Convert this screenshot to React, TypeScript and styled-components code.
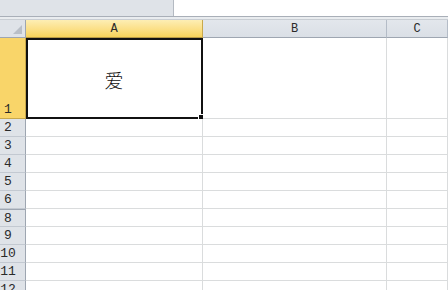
import React from "react";
import styled, { createGlobalStyle } from "styled-components";

const GlobalStyle = createGlobalStyle`
  html, body {
    margin: 0;
    padding: 0;
    background: #ffffff;
    overflow: hidden;
  }
`;

const Page = styled.div`
  width: 448px;
  height: 290px;
  overflow: hidden;
  display: flex;
  flex-direction: column;
  background: #fff;
  font-family: "Liberation Mono", "DejaVu Sans Mono", monospace;

  & > * {
    flex-shrink: 0;
  }
`;

const FormulaBar = styled.div`
  height: 16px;
  display: grid;
  grid-template-columns: 174px 1fr;
  border-bottom: 1px solid #a9afb8;
  background: #dfe3e8;
`;

const NameArea = styled.div`
  border-right: 1px solid #b4bac2;
  background: #dfe3e8;
`;

const FormulaInput = styled.div`
  background: #ffffff;
`;

const Strip = styled.div`
  height: 2px;
  background: #e9ecef;
  border-bottom: 1px solid #c8cdd3;
`;

const Sheet = styled.div`
  display: grid;
  grid-template-columns: 26px 177px 184px 1fr;
  grid-template-rows: 18px 81px;
  grid-auto-rows: 18px;
`;

const Corner = styled.div`
  position: relative;
  background: #dfe3e8;
  border-right: 1px solid #9ea6b1;
  border-bottom: 1px solid #9ea6b1;
  box-sizing: border-box;

  &::after {
    content: "";
    position: absolute;
    right: 3px;
    bottom: 3px;
    width: 0;
    height: 0;
    border-left: 9px solid transparent;
    border-bottom: 9px solid #b9bfc7;
  }
`;

const ColHead = styled.div<{ $active?: boolean }>`
  box-sizing: border-box;
  display: flex;
  align-items: center;
  justify-content: center;
  font-size: 12px;
  color: #2a2a2a;
  padding-top: 1px;
  border-right: 1px solid ${(p) => (p.$active ? "#c9a94b" : "#b4bcc7")};
  border-bottom: 1px solid ${(p) => (p.$active ? "#b89a45" : "#9ea6b1")};
  background: ${(p) =>
    p.$active
      ? "linear-gradient(#fdeeb4, #fbdf86 55%, #f7d35a)"
      : "linear-gradient(#e3e7ec, #dadfe6)"};
`;

const RowHead = styled.div<{ $active?: boolean; $tall?: boolean; $hiddenAbove?: boolean }>`
  box-sizing: border-box;
  display: flex;
  align-items: ${(p) => (p.$tall ? "flex-end" : "center")};
  justify-content: center;
  padding-right: 9px;
  padding-bottom: ${(p) => (p.$tall ? "1px" : "0")};
  font-size: 13px;
  color: #2a2a2a;
  background: ${(p) => (p.$active ? "#f9d569" : "#dfe3e8")};
  border-right: 1px solid ${(p) => (p.$active ? "#c9a94b" : "#9ea6b1")};
  border-bottom: 1px solid ${(p) => (p.$active ? "#c9a94b" : "#c3c9d1")};
  border-top: ${(p) => (p.$hiddenAbove ? "1px solid #9ea6b1" : "none")};
`;

const Cell = styled.div`
  box-sizing: border-box;
  position: relative;
  border-right: 1px solid #dadcdd;
  border-bottom: 1px solid #dadcdd;
  background: #fff;
  display: flex;
  align-items: center;
  justify-content: center;
`;

const Char = styled.span`
  font-family: "Noto Sans CJK SC", sans-serif;
  font-size: 19px;
  font-weight: 300;
  color: #111;
  margin-top: 3px;
`;

const Selection = styled.div`
  position: absolute;
  left: 0;
  top: 0;
  right: -1px;
  bottom: -1px;
  border: 2px solid #111;
  pointer-events: none;
`;

const FillHandle = styled.div`
  position: absolute;
  right: -3px;
  bottom: -3px;
  width: 5px;
  height: 5px;
  background: #111;
  outline: 1px solid #fff;
`;

const rows = ["2", "3", "4", "5", "6", "8", "9", "10", "11", "12"];

const App: React.FC = () => {
  return (
    <>
      <GlobalStyle />
      <Page>
        <FormulaBar>
          <NameArea />
          <FormulaInput />
        </FormulaBar>
        <Strip />
        <Sheet>
          <Corner />
          <ColHead $active>A</ColHead>
          <ColHead>B</ColHead>
          <ColHead>C</ColHead>

          <RowHead $active $tall>1</RowHead>
          <Cell>
            <Char>爱</Char>
            <Selection>
              <FillHandle />
            </Selection>
          </Cell>
          <Cell />
          <Cell />

          {rows.map((r) => (
            <React.Fragment key={r}>
              <RowHead $hiddenAbove={r === "8"}>{r}</RowHead>
              <Cell />
              <Cell />
              <Cell />
            </React.Fragment>
          ))}
        </Sheet>
      </Page>
    </>
  );
};

export default App;
